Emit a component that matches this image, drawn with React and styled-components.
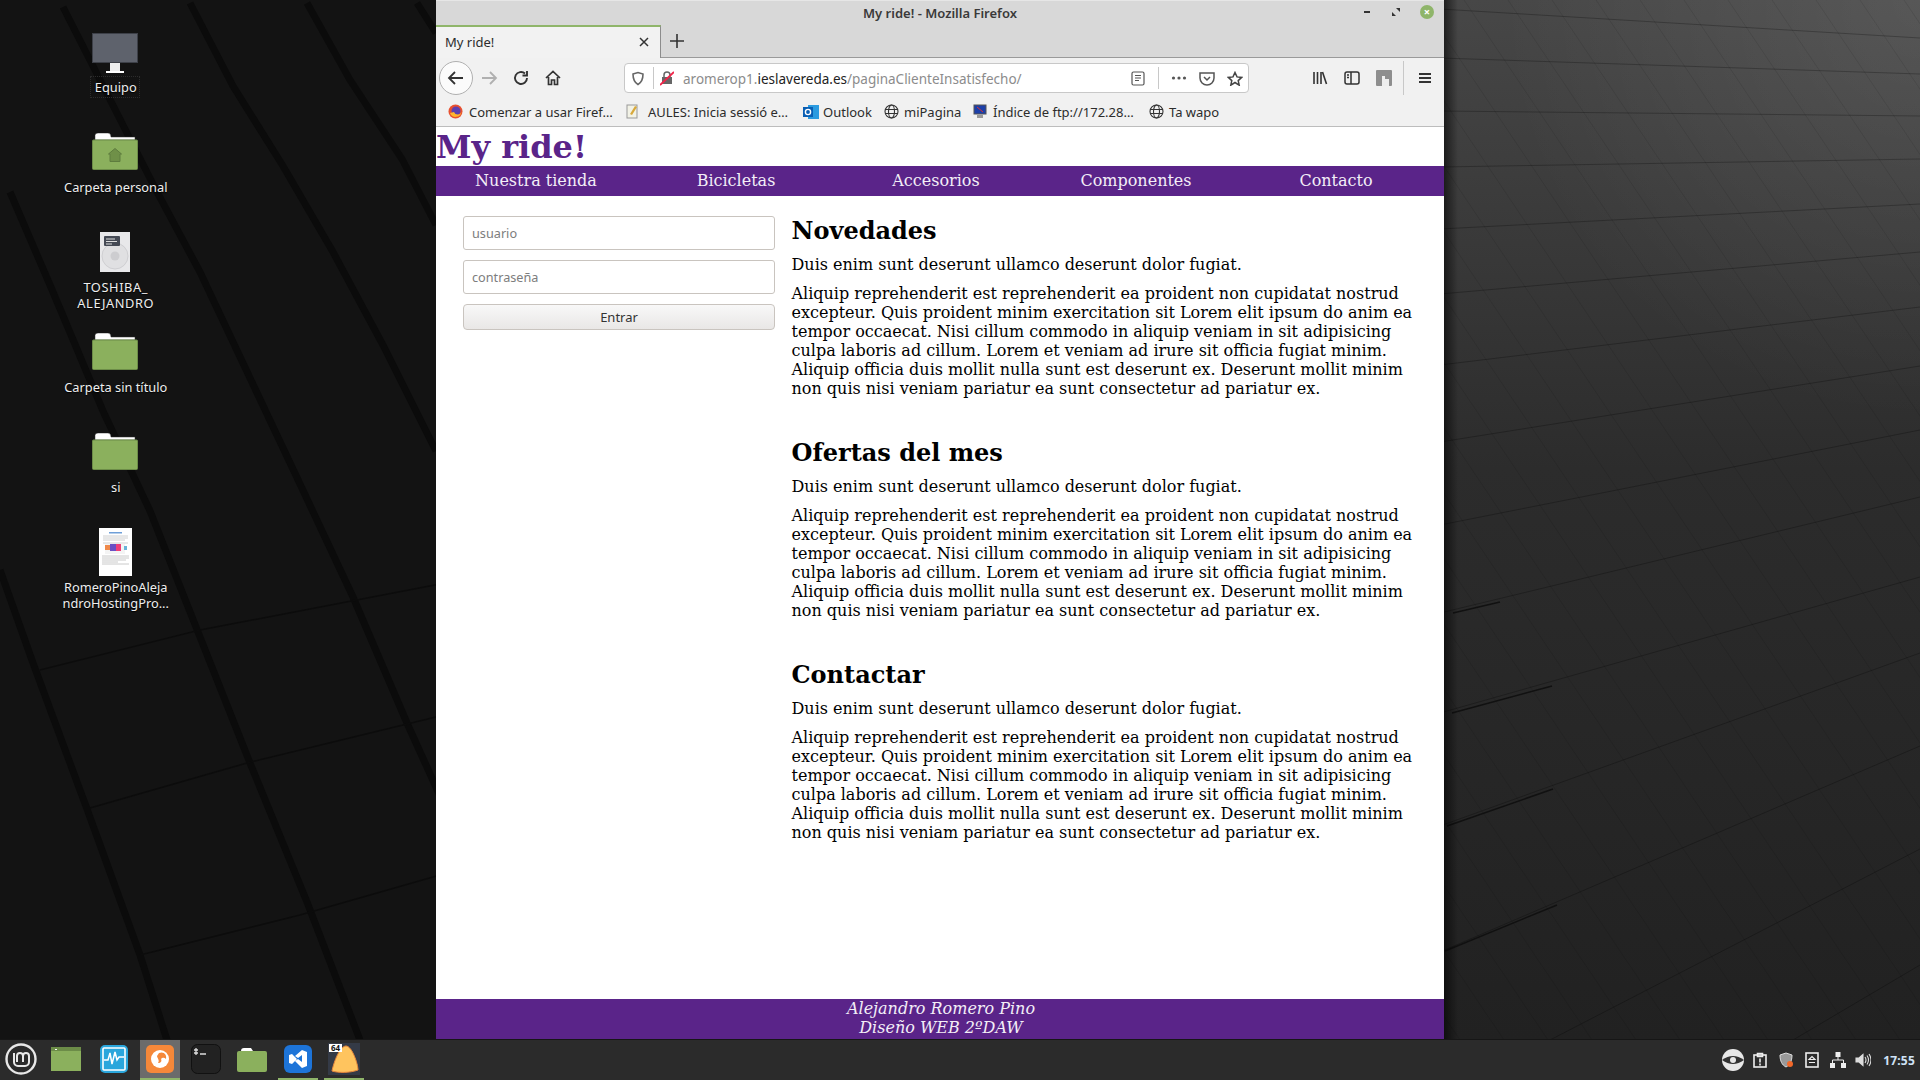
import React from "react";
import styled, { createGlobalStyle } from "styled-components";

const Global = createGlobalStyle`
  html, body { margin: 0; padding: 0; width: 1920px; height: 1080px; overflow: hidden; background: #111; }
  * { box-sizing: border-box; }
`;

const UI = `"Noto Sans", "Open Sans", sans-serif`;
const SERIF = `"DejaVu Serif", serif`;

const Screen = styled.div`
  width: 1920px;
  height: 1080px;
  display: flex;
  flex-direction: column;
  position: relative;
  overflow: hidden;
`;
const Wallpaper = styled.svg`
  position: absolute;
  inset: 0;
`;
const Desk = styled.div`
  flex: 1;
  position: relative;
  display: flex;
`;
const IconColumn = styled.div`
  width: 230px;
  padding-top: 28px;
  display: flex;
  flex-direction: column;
  position: relative;
`;
const DeskItem = styled.div`
  height: 100px;
  padding-top: ${(p) => p.$pad}px;
  display: flex;
  flex-direction: column;
  align-items: center;
  color: #eee;
  font: 12.8px/16px ${UI};
  text-align: center;
  text-shadow: 0 1px 1px #000;
  svg { display: block; margin-bottom: ${(p) => p.$gap}px; flex: none; }
`;
const DeskLabel = styled.span`
  padding-left: 1.5px;
  letter-spacing: ${(p) => (p.$spread ? "0.6px" : "normal")};
  outline: ${(p) => (p.$focus ? "1px dotted #2c2c2c" : "none")};
  outline-offset: 2px;
`;
const Win = styled.div`
  position: absolute;
  left: 436px;
  top: 0;
  width: 1008px;
  height: 1039px;
  display: flex;
  flex-direction: column;
  background: #fff;
`;
const TitleBar = styled.div`
  height: 25px;
  background: #d8d8d8;
  border-top: 1px solid #e6e6e6;
  display: flex;
  align-items: center;
  justify-content: center;
  position: relative;
  font: 600 13px ${UI};
  color: #3a3a3a;
`;
const WinButtons = styled.div`
  position: absolute;
  right: 10px;
  top: 4px;
  display: flex;
  align-items: center;
  gap: 19px;
`;
const CloseDot = styled.div`
  width: 14px;
  height: 14px;
  border-radius: 50%;
  background: #8fb56a;
  color: #fff;
  font: 700 11px/14px ${UI};
  text-align: center;
`;
const TabRow = styled.div`
  height: 33px;
  background: #d8d8d8;
  border-bottom: 1px solid #9a9a9a;
  display: flex;
  align-items: flex-start;
`;
const Tab = styled.div`
  width: 225px;
  height: 33px;
  background: #f2f2f2;
  border-top: 2px solid #8fb56a;
  border-right: 1px solid #8c8c8c;
  display: flex;
  align-items: center;
  justify-content: space-between;
  padding: 0 10px 2px 9px;
  font: 13px ${UI};
  color: #2c2c2c;
`;
const NewTab = styled.div`
  width: 32px;
  height: 32px;
  display: flex;
  align-items: center;
  justify-content: center;
`;
const Toolbar = styled.div`
  height: 40px;
  background: #f1f1f1;
  display: flex;
  align-items: center;
  padding-left: 3px;
`;
const BackCircle = styled.div`
  width: 34px;
  height: 34px;
  border-radius: 50%;
  border: 1px solid #b0b0b0;
  background: #fbfbfb;
  display: flex;
  align-items: center;
  justify-content: center;
`;
const ToolBtn = styled.div`
  width: 32px;
  display: flex;
  align-items: center;
  justify-content: center;
`;
const UrlBar = styled.div`
  width: 625px;
  height: 30px;
  margin-left: 55px;
  background: #fff;
  border: 1px solid #c8c8c8;
  border-radius: 4px;
  display: flex;
  align-items: center;
  padding: 0 5px 0 6px;
  font: 13.5px ${UI};
  color: #8c8c8c;
`;
const UrlSep = styled.div`
  width: 1px;
  height: ${(p) => p.$h || 22}px;
  background: #c8c8c8;
  margin: ${(p) => p.$m};
`;
const UrlText = styled.div`
  flex: 1;
  margin-left: 9px;
  padding-top: 1px;
  b { font-weight: 400; color: #222; }
`;
const UrlIcons = styled.div`
  display: flex;
  align-items: center;
  gap: 12px;
`;
const RightTools = styled.div`
  margin-left: 55px;
  display: flex;
  align-items: center;
`;
const Bookmarks = styled.div`
  height: 29px;
  background: #f1f1f1;
  border-bottom: 1px solid #bdbdbd;
  display: flex;
  align-items: center;
  padding: 0 0 1px 12px;
  font: 13px ${UI};
  color: #2c2c2c;
`;
const Mark = styled.div`
  width: ${(p) => p.$w}px;
  display: flex;
  align-items: center;
  gap: ${(p) => p.$gap}px;
  white-space: nowrap;
`;
const Page = styled.div`
  flex: 1;
  display: flex;
  flex-direction: column;
  font-family: ${SERIF};
  background: #fff;
`;
const Brand = styled.h1`
  margin: 0;
  height: 39px;
  font: 700 32px/41px ${SERIF};
  color: #5a2489;
`;
const Nav = styled.nav`
  height: 30px;
  background: #5a2489;
  display: grid;
  grid-template-columns: repeat(5, 200px);
`;
const NavLink = styled.a`
  color: #f3eef7;
  font: 16px/30px ${SERIF};
  text-align: center;
`;
const Main = styled.main`
  flex: 1;
  display: flex;
  padding-left: 27px;
`;
const Aside = styled.form`
  width: 312px;
  padding-top: 20px;
  display: flex;
  flex-direction: column;
  gap: 10px;
`;
const Input = styled.input`
  height: 34px;
  width: 100%;
  border: 1px solid #c9c4bf;
  border-radius: 3px;
  padding: 0 8px;
  font: 12.7px ${UI};
  background: #fff;
  &::placeholder { color: #7d7d7d; opacity: 1; }
`;
const Button = styled.button`
  height: 26px;
  width: 100%;
  border: 1px solid #c9c4bf;
  border-radius: 4px;
  background: linear-gradient(#f8f8f8, #e9e7e6);
  font: 13px ${UI};
  color: #333;
  padding: 0;
`;
const Content = styled.div`
  width: 633px;
  margin-left: 16.5px;
`;
const Section = styled.section`
  height: 222px;
  padding-top: 20.5px;
`;
const Heading = styled.h2`
  margin: 0;
  font: 700 24px/28px ${SERIF};
  color: #000;
`;
const Lead = styled.p`
  margin: 10px 0 0;
  font: 16px/19px ${SERIF};
  color: #000;
`;
const Body = styled.p`
  margin: 10.5px 0 0;
  font: 16px/19px ${SERIF};
  color: #000;
`;
const Footer = styled.footer`
  height: 40px;
  background: #5a2489;
  color: #f3eef7;
  font: italic 16px/18.5px ${SERIF};
  text-align: center;
  padding: 1px 0 0 2px;
`;
const Panel = styled.div`
  height: 41px;
  background: #2b2b2b;
  border-top: 1px solid #161616;
  display: flex;
  align-items: center;
  position: relative;
  padding-right: 5px;
`;
const Launcher = styled.div`
  display: flex;
  align-items: center;
  height: 40px;
`;
const Slot = styled.div`
  width: ${(p) => p.$w}px;
  margin-left: ${(p) => p.$ml || 0}px;
  height: 40px;
  display: flex;
  align-items: center;
  justify-content: center;
  background: ${(p) => (p.$active ? "#6b6b6b" : "transparent")};
  border-bottom: 2px solid ${(p) => (p.$open ? "#8fb56a" : "transparent")};
`;
const Tray = styled.div`
  margin-left: auto;
  display: flex;
  align-items: center;
  color: #cfe2f5;
  font: 700 12px ${UI};
  letter-spacing: 0.2px;
`;
const TrayItem = styled.div`
  width: ${(p) => p.$w}px;
  display: flex;
  align-items: center;
  justify-content: center;
`;
const Clock = styled.span`
  width: 33px;
  margin-left: 6px;
  text-align: right;
  white-space: nowrap;
`;

const paragraph =
  "Aliquip reprehenderit est reprehenderit ea proident non cupidatat nostrud excepteur. Quis proident minim exercitation sit Lorem elit ipsum do anim ea tempor occaecat. Nisi cillum commodo in aliquip veniam in sit adipisicing culpa laboris ad cillum. Lorem et veniam ad irure sit officia fugiat minim. Aliquip officia duis mollit nulla sunt est deserunt ex. Deserunt mollit minim non quis nisi veniam pariatur ea sunt consectetur ad pariatur ex.";

// thin seams of the wallpaper, right of the window
const seams = [
  [1440, 9, 1920, 38], [1440, 58, 1920, 74], [1440, 111, 1920, 116], [1440, 167, 1920, 159],
  [1440, 229, 1920, 204], [1440, 294, 1920, 252], [1440, 365, 1920, 307], [1440, 442, 1920, 366],
  [1440, 525, 1920, 430], [1440, 613, 1920, 497], [1440, 713, 1920, 577], [1440, 826, 1920, 653],
  [1440, 952, 1920, 746], [1550, 1040, 1920, 849], [1793, 1040, 1920, 965],
];
const cracks = [
  [1453, 613, 1500, 602], [1452, 713, 1552, 686], [1447, 826, 1553, 789], [1445, 951, 1557, 905],
];
const diagonals = Array.from({ length: 34 }, (_, i) => 760 + i * 44);
// dark bands and joints of the wallpaper, left of the window
const bands = [
  "190,3 233,86 283,166 333,252 383,345 436,451",
  "307,3 350,80 402,159 436,225",
  "417,3 436,33",
  "63,7 157,192 200,272 250,378 300,484 353,597 407,723 440,796",
  "10,192 53,292 103,411 150,511 200,637 250,763 307,902 360,1040",
  "0,570 33,663 87,809 140,955 167,1040",
];
const joints = [
  "40,670 200,630 440,584",
  "90,808 247,763 440,716",
  "140,955 300,915 440,875",
];

const Folder = ({ home }) => (
  <svg width="46" height="37" viewBox="0 0 46 37">
    <path d="M3 7V2.5Q3 0 6 0H16Q19 0 19 4H43V7Z" fill="#fff" stroke="#333" strokeWidth=".5" />
    <rect x=".5" y="7" width="45" height="29.5" rx="1" fill="#8bb05d" stroke="#6c8c48" />
    {home && <path d="M16.5 21L23 15.5L29.5 21H28V28.5H18V21Z" fill="#6f9048" stroke="#5e7c3e" />}
  </svg>
);

const Monitor = () => (
  <svg width="46" height="40" viewBox="0 0 46 40">
    <rect x=".5" y=".5" width="45" height="29" fill="#5e626c" stroke="#3d4048" />
    <rect x="18" y="30" width="10" height="8" fill="#eee" />
    <rect x="14" y="38" width="18" height="2" fill="#fff" />
  </svg>
);

const Disk = () => (
  <svg width="30" height="40" viewBox="0 0 30 40">
    <rect width="30" height="40" fill="#e8e8ea" />
    <circle cx="15" cy="24" r="13" fill="#e0e0e2" stroke="#cfcfd2" />
    <circle cx="15" cy="24" r="4.5" fill="#cdcdd0" />
    <rect x="4" y="4" width="16" height="10" rx="1" fill="#454a55" />
    <path d="M6 7h9M6 9.5h11M6 12h6" stroke="#ddd" strokeWidth="1" />
  </svg>
);

const DocThumb = () => (
  <svg width="33" height="48" viewBox="0 0 33 48">
    <rect width="33" height="48" fill="#fff" />
    <rect x="10" y="4" width="13" height="1.5" fill="#6f9fd8" />
    <path d="M4 8h25M4 10h25M4 12h22M4 15h25" stroke="#c4c4c4" strokeWidth=".8" />
    <rect x="6" y="16" width="20" height="10" fill="#f4f4f4" />
    <rect x="6" y="17" width="5" height="5" fill="#f08a4b" />
    <rect x="11" y="16" width="6" height="7" fill="#6a4fc4" />
    <rect x="17" y="16" width="5" height="7" fill="#ee3f77" />
    <rect x="25" y="18" width="3" height="4" fill="#69b4d8" />
    <path d="M3 28h27M3 30h27M3 32h24M3 34h16M3 36h27" stroke="#bdbdbd" strokeWidth=".8" />
  </svg>
);

const Stroke = ({ w = 16, h = 16, c = "#3a3a3a", sw = 2, children }) => (
  <svg width={w} height={h} viewBox={`0 0 ${w} ${h}`} fill="none" stroke={c} strokeWidth={sw}>
    {children}
  </svg>
);

const Globe = () => (
  <Stroke w={15} h={15} sw={1.1} c="#333">
    <circle cx="7.5" cy="7.5" r="6.5" />
    <ellipse cx="7.5" cy="7.5" rx="3" ry="6.5" />
    <path d="M1 5.5h13M1 9.5h13" />
  </Stroke>
);

const FirefoxMark = () => (
  <svg width="15" height="15" viewBox="0 0 15 15">
    <circle cx="7.5" cy="7.5" r="7" fill="#e8502f" />
    <circle cx="8" cy="7" r="4.5" fill="#5b3fb0" />
    <path d="M2 9 A6 6 0 0 0 13.5 8 A4 4 0 0 1 6 8 Z" fill="#ffb52e" />
  </svg>
);

const Article = ({ title }) => (
  <Section>
    <Heading>{title}</Heading>
    <Lead>Duis enim sunt deserunt ullamco deserunt dolor fugiat.</Lead>
    <Body>{paragraph}</Body>
  </Section>
);

export default function App() {
  return (
    <Screen>
      <Global />
      <Wallpaper width="1920" height="1040" viewBox="0 0 1920 1040">
        <defs>
          <linearGradient id="fade" x1="0" y1="0" x2="0" y2="1">
            <stop offset="0" stopColor="#474747" />
            <stop offset=".45" stopColor="#2c2c2c" />
            <stop offset="1" stopColor="#212121" />
          </linearGradient>
          <radialGradient id="glow" gradientUnits="userSpaceOnUse" cx="1920" cy="0" r="420">
            <stop offset="0" stopColor="#fff" stopOpacity=".09" />
            <stop offset="1" stopColor="#fff" stopOpacity="0" />
          </radialGradient>
          <linearGradient id="edge" x1="0" y1="0" x2="1" y2="0">
            <stop offset="0" stopColor="#000" stopOpacity=".55" />
            <stop offset="1" stopColor="#000" stopOpacity="0" />
          </linearGradient>
        </defs>
        <rect width="1920" height="1040" fill="#131313" />
        {bands.map((b) => (
          <polyline key={b} points={b} fill="none" stroke="#0b0b0b" strokeWidth="7" />
        ))}
        {joints.map((b) => (
          <polyline key={b} points={b} fill="none" stroke="#0c0c0c" strokeWidth="1.5" />
        ))}
        <rect x="1440" width="480" height="1040" fill="url(#fade)" />
        <rect x="1440" width="480" height="1040" fill="url(#glow)" />
        <g stroke="#000" strokeOpacity=".09">
          {diagonals.map((x) => (
            <line key={x} x1={Math.max(x, 1440)} y1={x < 1440 ? (1440 - x) * 1.486 : 0} x2={x + 700} y2="1040" />
          ))}
          {seams.map((s) => (
            <line key={s[1]} x1={s[0]} y1={s[1]} x2={s[2]} y2={s[3]} strokeOpacity=".25" />
          ))}
        </g>
        {cracks.map((s) => (
          <line key={s[1]} x1={s[0]} y1={s[1]} x2={s[2]} y2={s[3]} stroke="#111" strokeWidth="1.5" />
        ))}
        <rect x="1444" width="14" height="1040" fill="url(#edge)" />
      </Wallpaper>
      <Desk>
        <IconColumn>
          <DeskItem $pad={5} $gap={6}><Monitor /><DeskLabel $focus>Equipo</DeskLabel></DeskItem>
          <DeskItem $pad={5} $gap={9}><Folder home /><DeskLabel>Carpeta personal</DeskLabel></DeskItem>
          <DeskItem $pad={4} $gap={7}><Disk /><DeskLabel $spread>TOSHIBA_<br />ALEJANDRO</DeskLabel></DeskItem>
          <DeskItem $pad={5} $gap={9}><Folder /><DeskLabel>Carpeta sin título</DeskLabel></DeskItem>
          <DeskItem $pad={5} $gap={9}><Folder /><DeskLabel>si</DeskLabel></DeskItem>
          <DeskItem $pad={0} $gap={3}><DocThumb /><DeskLabel>RomeroPinoAleja<br />ndroHostingPro...</DeskLabel></DeskItem>
        </IconColumn>
        <Win>
          <TitleBar>
            My ride! - Mozilla Firefox
            <WinButtons>
              <Stroke w={10} h={10} c="#333"><path d="M2 5h6" /></Stroke>
              <svg width="10" height="10" viewBox="0 0 10 10" fill="#333"><path d="M5 1h4v4zM1 5l4 4H1z" /></svg>
              <CloseDot>×</CloseDot>
            </WinButtons>
          </TitleBar>
          <TabRow>
            <Tab>
              My ride!
              <Stroke w={12} h={12} sw={1.5} c="#333"><path d="M2 2l8 8M10 2l-8 8" /></Stroke>
            </Tab>
            <NewTab>
              <Stroke w={16} h={16} sw={1.6} c="#333"><path d="M8 1v14M1 8h14" /></Stroke>
            </NewTab>
          </TabRow>
          <Toolbar>
            <BackCircle>
              <Stroke w={18} h={18} sw={1.8} c="#333"><path d="M16 9H2M8 3L2 9l6 6" /></Stroke>
            </BackCircle>
            <ToolBtn>
              <Stroke w={18} h={18} sw={1.8} c="#b0b0b0"><path d="M2 9h14M10 3l6 6-6 6" /></Stroke>
            </ToolBtn>
            <ToolBtn>
              <Stroke w={16} h={16} sw={1.9} c="#333"><path d="M14 8A6 6 0 1 1 12 3.5M14 1v4.5H9.5" /></Stroke>
            </ToolBtn>
            <ToolBtn>
              <Stroke w={16} h={16} sw={1.7} c="#333"><path d="M1 8l7-6.5L15 8M3.5 7v7.5h3V10h3v4.5h3V7" /></Stroke>
            </ToolBtn>
            <UrlBar>
              <Stroke w={14} h={15} sw={1.6} c="#666"><path d="M2 3l5-1.5L12 3c0 5-1.5 8.5-5 10.5C3.5 11.5 2 8 2 3z" /></Stroke>
              <UrlSep $m="0 6px 0 8px" />
              <svg width="14" height="16" viewBox="0 0 14 16">
                <rect x="2" y="7" width="10" height="7" fill="#666" />
                <path d="M4 7V5a3 3 0 0 1 6 0v2" fill="none" stroke="#666" strokeWidth="1.5" />
                <path d="M0 15L14 2" stroke="#f0254a" strokeWidth="1.8" />
              </svg>
              <UrlText>aromerop1.<b>ieslavereda.es</b>/paginaClienteInsatisfecho/</UrlText>
              <Stroke w={14} h={15} sw={1.2} c="#555"><rect x="1" y="1" width="12" height="13" rx="1.5" /><path d="M4 4.5h6M4 7h6M4 9.5h4" /></Stroke>
              <UrlSep $m="0 12px 0 13px" />
              <UrlIcons>
                <Stroke w={16} h={4} sw={0} c="none"><circle cx="2.5" cy="2" r="1.6" fill="#555" /><circle cx="8" cy="2" r="1.6" fill="#555" /><circle cx="13.5" cy="2" r="1.6" fill="#555" /></Stroke>
                <Stroke w={16} h={15} sw={1.5} c="#555"><path d="M1 2h14v5a7 7 0 0 1-14 0zM5 6l3 3 3-3" /></Stroke>
                <Stroke w={16} h={15} sw={1.5} c="#444"><path d="M8 1.5l2 4.4 4.7.5-3.5 3.2 1 4.6L8 11.5l-4.2 2.7 1-4.6L1.3 6.4 6 5.9z" /></Stroke>
              </UrlIcons>
            </UrlBar>
            <RightTools>
              <ToolBtn><Stroke w={16} h={14} sw={1.6} c="#333"><path d="M2 1v12M5.5 1v12M9 1v12M10.5 1l4 12" /></Stroke></ToolBtn>
              <ToolBtn><Stroke w={16} h={14} sw={1.5} c="#333"><rect x="1" y="1" width="14" height="12" rx="2" /><path d="M7 1v12M3 4h2M3 6.5h2" /></Stroke></ToolBtn>
              <ToolBtn>
                <svg width="16" height="16" viewBox="0 0 16 16"><rect width="16" height="16" rx="1" fill="#8e8e8e" /><path d="M6 16V6h3v3h4v7z" fill="#eee" /></svg>
              </ToolBtn>
              <UrlSep $m="0 5px 0 3px" $h={34} />
              <ToolBtn><Stroke w={14} h={12} sw={1.8} c="#333"><path d="M1 2h12M1 6h12M1 10h12" /></Stroke></ToolBtn>
            </RightTools>
          </Toolbar>
          <Bookmarks>
            <Mark $w={178} $gap={6}><FirefoxMark />Comenzar a usar Firef…</Mark>
            <Mark $w={177} $gap={9}>
              <svg width="13" height="15" viewBox="0 0 13 15"><rect x="1" y="1" width="10" height="13" fill="#f2f2e6" stroke="#999" /><path d="M4 10l5-8 2 1-5 8z" fill="#d8a83a" /></svg>
              AULES: Inicia sessió e…
            </Mark>
            <Mark $w={81} $gap={4}>
              <svg width="16" height="16" viewBox="0 0 16 16"><rect x="5" y="1" width="11" height="14" fill="#2b9be0" /><rect x="0" y="3" width="10" height="10" fill="#0a5fb4" /><circle cx="5" cy="8" r="2.6" fill="none" stroke="#fff" strokeWidth="1.4" /></svg>
              Outlook
            </Mark>
            <Mark $w={89} $gap={5}><Globe />miPagina</Mark>
            <Mark $w={176} $gap={6}>
              <svg width="14" height="15" viewBox="0 0 14 15"><rect x="1" y="1" width="12" height="9" fill="#1c3fa8" stroke="#555" /><path d="M4 3l6 5" stroke="#d33" /><rect x="4" y="11" width="6" height="3" fill="#999" /></svg>
              Índice de ftp://172.28…
            </Mark>
            <Mark $w={80} $gap={5}><Globe />Ta wapo</Mark>
          </Bookmarks>
          <Page>
            <Brand>My ride!</Brand>
            <Nav>
              <NavLink>Nuestra tienda</NavLink>
              <NavLink>Bicicletas</NavLink>
              <NavLink>Accesorios</NavLink>
              <NavLink>Componentes</NavLink>
              <NavLink>Contacto</NavLink>
            </Nav>
            <Main>
              <Aside>
                <Input placeholder="usuario" />
                <Input placeholder="contraseña" />
                <Button type="button">Entrar</Button>
              </Aside>
              <Content>
                <Article title="Novedades" />
                <Article title="Ofertas del mes" />
                <Article title="Contactar" />
              </Content>
            </Main>
            <Footer>
              Alejandro Romero Pino<br />Diseño WEB 2ºDAW
            </Footer>
          </Page>
        </Win>
      </Desk>
      <Panel>
        <Launcher>
          <Slot $w={42}>
            <svg width="32" height="32" viewBox="0 0 32 32" fill="none" stroke="#e8e8e8">
              <circle cx="16" cy="16" r="14.5" strokeWidth="2.4" />
              <path d="M9 10v9a4 4 0 0 0 4 4h7a4 4 0 0 0 4-4v-6a3 3 0 0 0-6 0v6M12 19v-6a3 3 0 0 1 6 0" strokeWidth="2" />
            </svg>
          </Slot>
          <Slot $w={48}>
            <svg width="30" height="24" viewBox="0 0 30 24"><rect width="30" height="24" fill="#8bb05d" /><rect width="30" height="4" fill="#6c8c48" /><rect x="4" y="2" width="2" height="1" fill="#fff" /></svg>
          </Slot>
          <Slot $w={48}>
            <svg width="28" height="28" viewBox="0 0 28 28"><rect width="28" height="28" rx="5" fill="#2aa6dc" /><rect x="3" y="3" width="22" height="22" rx="1" fill="none" stroke="#fff" strokeWidth="1.6" /><path d="M4 15h4l2-7 2 11 3-12 2 8 2-3h5" fill="none" stroke="#fff" strokeWidth="1.5" /></svg>
          </Slot>
          <Slot $w={40} $ml={2} $active $open>
            <svg width="28" height="28" viewBox="0 0 28 28"><rect width="28" height="28" rx="5" fill="#f5883a" /><circle cx="14" cy="14" r="9" fill="#fff" /><path d="M13 8c5-2 8 2 7 6-2-2-4-1-5 0 1 2 0 4-3 4 2-3-1-5-1-7z" fill="#f5883a" /></svg>
          </Slot>
          <Slot $w={52}>
            <svg width="30" height="30" viewBox="0 0 30 30"><rect x=".5" y=".5" width="29" height="29" rx="6" fill="#222" stroke="#111" /><path d="M5 11V4M3 9h4M3 6h4M9 10h6" stroke="#ddd" strokeWidth="1.3" /></svg>
          </Slot>
          <Slot $w={40}>
            <svg width="30" height="26" viewBox="0 0 30 26"><path d="M4 5q0-3 3-3h7l2 3h12v5H4z" fill="#fff" /><rect y="5" width="30" height="21" rx="2" fill="#8bb05d" /></svg>
          </Slot>
          <Slot $w={40} $ml={6} $open>
            <svg width="28" height="28" viewBox="0 0 28 28"><rect width="28" height="28" rx="6" fill="#1d74d8" /><path d="M5 10l3-1 5 5-5 5-3-1zM18 5l5 2v14l-5 2-7-7 3-2 4 3V10l-4 3-3-2z" fill="#fff" /></svg>
          </Slot>
          <Slot $w={40} $ml={6} $open>
            <svg width="32" height="32" viewBox="0 0 32 32"><rect width="32" height="32" fill="#343a46" /><path d="M4 28C6 18 12 3 18 3c6 0 12 18 12 24-8 3-20 3-26 1z" fill="#ffc45e" stroke="#e8873a" /><rect x="1" y="1" width="13" height="8" fill="#fff" /><text x="7.5" y="8" fontSize="8" fontWeight="700" textAnchor="middle" fontFamily="Noto Sans" fill="#111">64</text></svg>
          </Slot>
        </Launcher>
        <Tray>
          <TrayItem $w={28}>
            <svg width="22" height="22" viewBox="0 0 22 22"><circle cx="11" cy="11" r="11" fill="#e8e8e8" /><path d="M0 11q11-8 22 0q-11 8-22 0z" fill="#333" /><circle cx="11" cy="11" r="3" fill="#e8e8e8" /></svg>
          </TrayItem>
          <TrayItem $w={26}>
            <Stroke w={14} h={16} sw={1.6} c="#eee"><rect x="1" y="3" width="12" height="12" /><path d="M4.5 1.5h5v3h-5zM7 6.5v4M7 11.5v2" /></Stroke>
          </TrayItem>
          <TrayItem $w={26}>
            <svg width="16" height="16" viewBox="0 0 16 16"><path d="M2 3l6-2 6 2c0 6-2 10-6 12C4 13 2 9 2 3z" fill="#999" stroke="#ddd" /><circle cx="12" cy="12" r="3" fill="#f2682a" /></svg>
          </TrayItem>
          <TrayItem $w={26}>
            <Stroke w={14} h={16} sw={1.6} c="#eee"><rect x="1" y="1" width="12" height="14" /><path d="M4 7.5l3-3 3 3zM4 10.5h6" strokeWidth="1.2" /></Stroke>
          </TrayItem>
          <TrayItem $w={25}>
            <svg width="16" height="16" viewBox="0 0 16 16" fill="#eee"><rect x="5.5" y="0" width="5" height="5" /><rect x="0" y="11" width="5" height="5" /><rect x="11" y="11" width="5" height="5" /><path d="M8 5v3M2.5 11V8h11v3" fill="none" stroke="#eee" /></svg>
          </TrayItem>
          <TrayItem $w={26}>
            <Stroke w={16} h={14} sw={1.1} c="#ddd"><path d="M1 5h3l4-3.5v11L4 9H1z" fill="#ddd" /><path d="M10 4q2 3 0 6M12 2.5q3 4.5 0 9M14 1q4 6 0 12" /></Stroke>
          </TrayItem>
          <Clock>17:55</Clock>
        </Tray>
      </Panel>
    </Screen>
  );
}
